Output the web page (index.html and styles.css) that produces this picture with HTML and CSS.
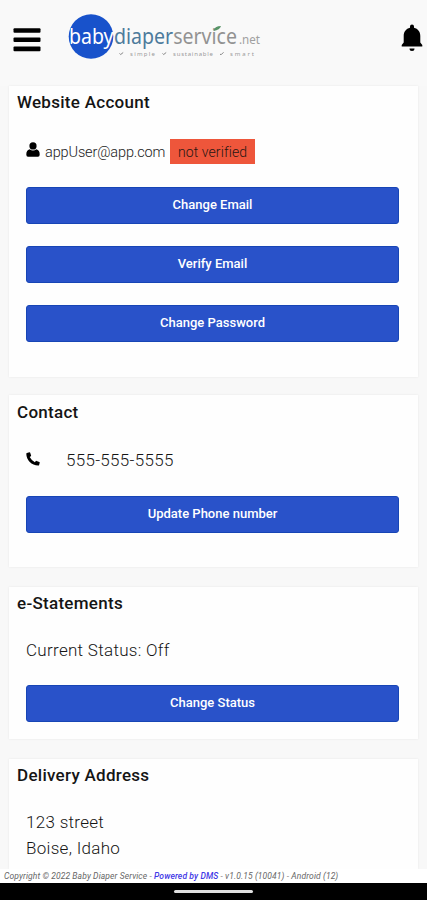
FILE: index.html
```
<!DOCTYPE html>
<html lang="en">
<head>
<meta charset="utf-8">
<title>Baby Diaper Service</title>
<link rel="stylesheet" href="styles.css">
</head>
<body>
<div class="app">
  <header class="topbar">
    <svg class="menu" viewBox="0 0 28 24" aria-hidden="true"><rect x="0.5" y="0.2" width="27" height="4.6" rx="1"/><rect x="0.5" y="9.4" width="27" height="4.6" rx="1"/><rect x="0.5" y="18.600" width="27" height="4.6" rx="1"/></svg>
    <svg class="logo" viewBox="0 0 194 48">
      <circle cx="23" cy="23.5" r="22.3" fill="#1852cb"/>
      <g font-family="Noto Sans, sans-serif">
        <text x="1" y="31" font-size="22" textLength="44.500" lengthAdjust="spacingAndGlyphs" fill="#fff">baby</text>
        <text x="46" y="31" font-size="21" fill="#4d7b9c" textLength="123" lengthAdjust="spacingAndGlyphs">diaper<tspan fill="#929292">service<tspan></tspan></tspan></text>
        <text x="171" y="31" font-size="13" textLength="21" lengthAdjust="spacingAndGlyphs" fill="#a0a0a0">.net</text>
        <g font-size="6" fill="#9a9a9a">
          <text x="62" y="43" textLength="25">simple</text>
          <text x="105" y="43" textLength="40">sustainable</text>
          <text x="162" y="43" textLength="24">smart</text>
        </g>
      </g>
      <path d="M145.500 18q1-5 7.500-5q-1 4-7.500 5z" fill="#589467"/>
      <path d="M51.500 40.500l1.200 1l2.500-2M94.500 40.500l1.200 1l2.500-2M152 41l1 .8l2.500-2.500" fill="none" stroke="#858585"/>
    </svg>
    <svg class="bell" viewBox="0 0 22 28" aria-hidden="true"><path d="M11 0.500a2 2 0 0 1 2 2v1.200c4 1 6.300 4 6.300 8.300v6.500l2 2.500v1.600H.7V21l2-2.500V12C2.700 7.700 5 4.700 9 3.700V2.500a2 2 0 0 1 2-2zM8.500 24.500h5a2.500 2.500 0 0 1-5 0z"/></svg>
  </header>
  <main class="content">
    <section class="card account">
      <h2>Website Account</h2>
      <div class="user">
        <svg class="person" viewBox="0 0 14 15" aria-hidden="true"><circle cx="7" cy="3.900" r="3.600"/><path d="M3.600 7.200Q7 10 10.400 7.200Q13.700 8 13.700 12.500Q13.700 14.700 12 14.700H2Q.3 14.700.3 12.500Q.3 8 3.600 7.200z"/></svg>
        <span class="email">appUser@app.com</span>
        <span class="badge">not verified</span>
      </div>
      <div class="actions">
        <button>Change Email</button>
        <button>Verify Email</button>
        <button>Change Password</button>
      </div>
    </section>
    <section class="card contact">
      <h2>Contact</h2>
      <div class="phone-row">
        <svg class="phone" viewBox="0 0 14 14" aria-hidden="true"><path d="M1 .9L3.400.2Q4 .1 4.200.7L5.100 3.400Q5.200 3.900 4.800 4.200L3.700 5Q5.400 8.400 8.900 10.200L9.800 9Q10.100 8.700 10.600 8.900L13.300 10Q13.900 10.300 13.700 10.800L13.100 12.900Q13 13.500 12.200 13.500C5.600 13.500.3 8.300.3 1.800Q.3 1.100 1 .9z"/></svg>
        <span class="number">555-555-5555</span>
      </div>
      <button>Update Phone number</button>
    </section>
    <section class="card statements">
      <h2>e-Statements</h2>
      <p class="status">Current Status: Off</p>
      <button>Change Status</button>
    </section>
    <section class="card delivery">
      <h2>Delivery Address</h2>
      <address>123 street<br>Boise, Idaho</address>
    </section>
  </main>
  <footer class="legal">Copyright © 2022 Baby Diaper Service - <a>Powered by DMS</a> - v1.0.15 (10041) - Android (12)</footer>
  <div class="navbar"><div class="handle"></div></div>
</div>
</body>
</html>
```
FILE: styles.css
```
* { box-sizing: border-box; }
body { margin: 0; font-family: Roboto, sans-serif; color: #202020; background: #f8f8f8; }
.app { height: 900px; display: flex; flex-direction: column; overflow: hidden; }
.topbar { height: 86px; flex: none; display: flex; align-items: flex-start; padding: 13px 4px 0 13px; background: #f9f9f9; }
.menu { width: 28px; height: 24px; margin-top: 15px; }
.logo { width: 194px; height: 48px; margin-left: 27px; }
.bell { width: 22px; height: 28px; margin: 11px 0 0 auto; }
.content { height: 783px; flex: none; padding: 0 9px; }
.card { width: 409px; background: #fefefe; padding: 0 18px 0 17px; box-shadow: 0 0 2px #e6e6e6; overflow: hidden; }
.card h2 { margin: 0 0 0 -9px; font-size: 17px; line-height: 20px; font-weight: 500; letter-spacing: 0.28px; padding-top: 6px; color: #151515; }
.account { height: 291px; margin-bottom: 18px; }
.contact { height: 172px; margin-bottom: 20px; }
.contact h2 { padding-top: 7px; }
.statements { height: 152px; margin-bottom: 20px; }
.delivery { height: 110px; }
.user { display: flex; margin-top: 27px; height: 25px; align-items: center; }
.person { width: 14px; height: 15px; margin: -5px 5px 0 0; }
.email { font-size: 14.5px; font-weight: 300; width: 125px; padding-top: 2px; letter-spacing: -0.13px; color: #222; }
.badge { background: #ee563b; width: 85px; height: 25px; line-height: 26px; text-align: center; font-size: 14px; font-weight: 300; letter-spacing: 0.1px; color: #291713; }
.actions { display: flex; flex-direction: column; gap: 22px; margin-top: 23px; }
button { display: block; width: 373px; height: 37px; padding: 0 0 2px; border: 1px solid #1745b5; border-radius: 3px; background: #2952c9; color: #fff; font: 500 13px Roboto, sans-serif; }
.phone-row { display: flex; align-items: center; height: 24px; margin-top: 26px; margin-bottom: 24px; }
.phone { width: 14px; height: 14px; margin: -3px 26px 0 0; }
.number, .status, address { font-size: 17px; font-weight: 300; letter-spacing: 0.3px; color: #151515; }
.status { margin: 25px 0 23px; line-height: 24px; }
address { font-style: normal; line-height: 26px; margin-top: 24px; }
.legal { height: 14px; flex: none; padding-left: 4px; font-size: 8.5px; line-height: 14px; letter-spacing: 0.11px; font-style: italic; color: #666; background: #fff; white-space: nowrap; }
.legal a { color: #3f38e6; font-weight: 500; }
.navbar { height: 17px; flex: none; background: #000; display: flex; justify-content: center; align-items: center; }
.handle { width: 79px; height: 3px; border-radius: 2px; background: #e0e0e0; }
```
